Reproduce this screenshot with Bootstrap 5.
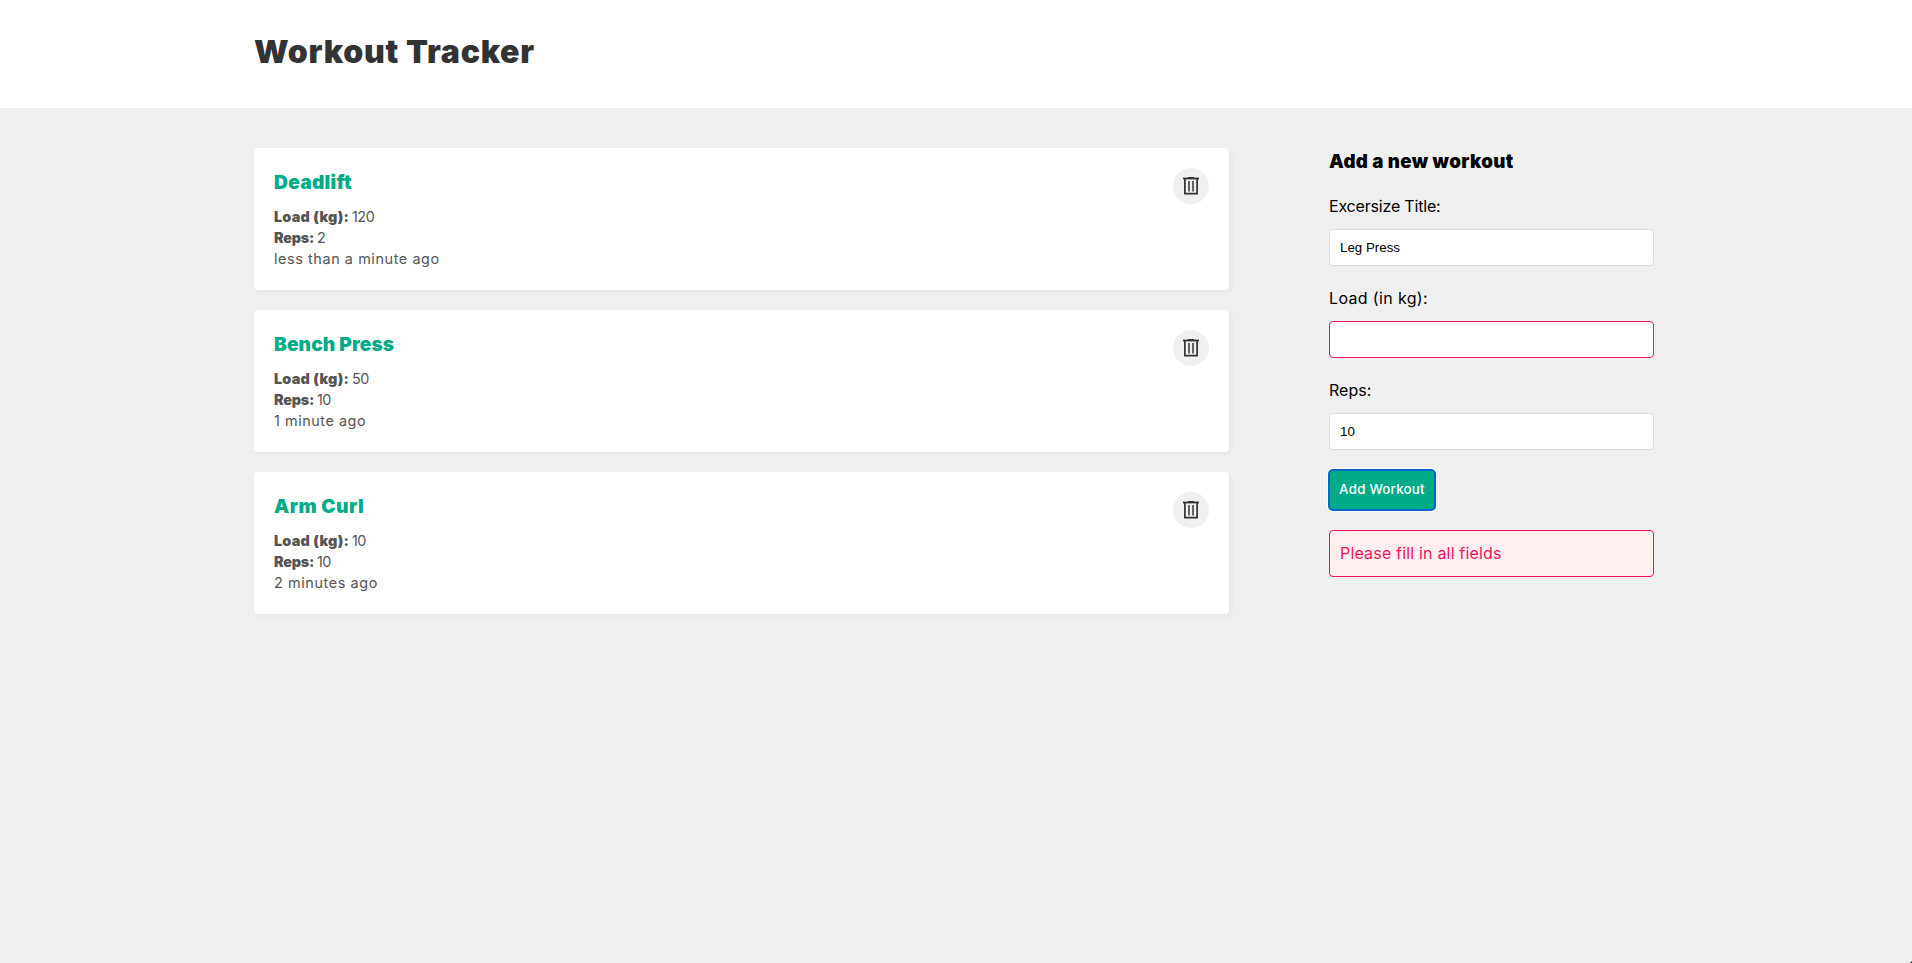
<!DOCTYPE html>
<html lang="en">
<head>
<meta charset="utf-8">
<meta name="viewport" content="width=device-width, initial-scale=1">
<title>Workout Tracker</title>
<link href="https://cdn.jsdelivr.net/npm/bootstrap@5.3.0/dist/css/bootstrap.min.css" rel="stylesheet">
<style>
:root { --primary: #00ac87; --error: #f0145f; }
body { background: #f0f0f0; font-family: Inter, sans-serif; color: #000; height: 100vh; overflow: hidden; }
.wrap { width: 1400px; margin-left: 254px; }
.site-header { height: 108px; padding-top: 28px; }
.site-header h1 { font-size: 32px; font-weight: 900; line-height: 48px; letter-spacing: .75px; color: #333; }
.home { display: grid; grid-template-columns: 3fr 1fr; gap: 100px; padding-top: 40px; }
.workout { border: 0; border-radius: 4px; padding: 20px; height: 142px; box-shadow: 2px 2px 5px rgba(0,0,0,.05); }
.workout h4 { font-size: 19.2px; line-height: 28px; font-weight: 900; color: var(--primary); margin: 0 0 10px; }
.workout p { font-size: 14.4px; line-height: 21px; color: #555; margin: 0; white-space: nowrap; }
.workout strong { font-weight: 900; display: inline-block; }
.workout .load { width: 78px; letter-spacing: .23px; }
.workout .reps { width: 43px; letter-spacing: -.25px; }
.num { letter-spacing: -.5px; }
.trash { width: 36px; height: 36px; background: #f0f0f0; border: 0; }
.create h3 { font-size: 18.7px; font-weight: 900; line-height: 27px; letter-spacing: .34px; margin-bottom: 19px; }
.create label { display: block; font-size: 16px; line-height: 24px; margin-bottom: 11px; }
.create input { height: 37px; padding: 0 10px; border: 1px solid #ddd; border-radius: 4px; font: 13.33px "Liberation Sans", sans-serif; color: #000; margin-bottom: 20px; box-shadow: none; }
.create input.missing { border-color: var(--error); }
.add { width: 106px; height: 40px; padding: 0; border: 0; border-radius: 4px; background: var(--primary); color: #fff; font-size: 13.33px; font-weight: 500; letter-spacing: .23px; outline: 2px solid #0067d1; outline-offset: -1px; box-shadow: 0 0 0 2px #fff; }
.add:hover { background: var(--primary); color: #fff; }
.error { height: 47px; padding: 0 10px; border: 1px solid var(--error); border-radius: 4px; background: #ffefef; color: var(--error); margin-top: 20px; line-height: 45px; letter-spacing: .18px; }
.corner { right: 0; bottom: 0; width: 2px; height: 2px; background: #222; clip-path: polygon(100% 0, 100% 100%, 0 100%); }
</style>
</head>
<body>
<header class="site-header bg-white"><div class="wrap"><h1 class="mb-0">Workout Tracker</h1></div></header>
<main class="wrap home">
  <section class="d-flex flex-column" style="gap:20px">
    <article class="card workout flex-row justify-content-between">
      <div>
        <h4 style="letter-spacing:.27px">Deadlift</h4>
        <p><strong class="load">Load (kg):</strong><span class="num">120</span></p>
        <p><strong class="reps">Reps:</strong><span class="num">2</span></p>
        <p style="letter-spacing:.59px">less than a minute ago</p>
      </div>
      <button class="trash rounded-circle d-flex align-items-center justify-content-center p-0" aria-label="Delete"><svg width="16" height="18" viewBox="0 0 16 18" fill="none" stroke="#333"><path d="M0 1.5h16" stroke-width="1.8"/><path d="M5 .6h6" stroke-width="1.2"/><path d="M1.9 2v14.6h12.2V2" stroke-width="1.7"/><path d="M6 4v10.5M10 4v10.5" stroke-width="1.8" stroke="#555"/></svg></button>
    </article>
    <article class="card workout flex-row justify-content-between">
      <div>
        <h4 style="letter-spacing:.08px">Bench Press</h4>
        <p><strong class="load">Load (kg):</strong><span class="num">50</span></p>
        <p><strong class="reps">Reps:</strong><span class="num">10</span></p>
        <p style="letter-spacing:.55px">1 minute ago</p>
      </div>
      <button class="trash rounded-circle d-flex align-items-center justify-content-center p-0" aria-label="Delete"><svg width="16" height="18" viewBox="0 0 16 18" fill="none" stroke="#333"><path d="M0 1.5h16" stroke-width="1.8"/><path d="M5 .6h6" stroke-width="1.2"/><path d="M1.9 2v14.6h12.2V2" stroke-width="1.7"/><path d="M6 4v10.5M10 4v10.5" stroke-width="1.8" stroke="#555"/></svg></button>
    </article>
    <article class="card workout flex-row justify-content-between">
      <div>
        <h4 style="letter-spacing:.44px">Arm Curl</h4>
        <p><strong class="load">Load (kg):</strong><span class="num">10</span></p>
        <p><strong class="reps">Reps:</strong><span class="num">10</span></p>
        <p style="letter-spacing:.6px">2 minutes ago</p>
      </div>
      <button class="trash rounded-circle d-flex align-items-center justify-content-center p-0" aria-label="Delete"><svg width="16" height="18" viewBox="0 0 16 18" fill="none" stroke="#333"><path d="M0 1.5h16" stroke-width="1.8"/><path d="M5 .6h6" stroke-width="1.2"/><path d="M1.9 2v14.6h12.2V2" stroke-width="1.7"/><path d="M6 4v10.5M10 4v10.5" stroke-width="1.8" stroke="#555"/></svg></button>
    </article>
  </section>
  <form class="create">
    <h3>Add a new workout</h3>
    <label for="title" style="letter-spacing:-.19px">Excersize Title:</label>
    <input id="title" class="form-control" type="text" value="Leg Press">
    <label for="load" style="letter-spacing:.35px">Load (in kg):</label>
    <input id="load" class="form-control missing" type="text">
    <label for="reps">Reps:</label>
    <input id="reps" class="form-control" type="text" value="10">
    <button class="btn add d-block" type="button">Add Workout</button>
    <div class="error">Please fill in all fields</div>
  </form>
</main>
<div class="corner position-fixed"></div>
<script src="https://cdn.jsdelivr.net/npm/bootstrap@5.3.0/dist/js/bootstrap.bundle.min.js"></script>
</body>
</html>
